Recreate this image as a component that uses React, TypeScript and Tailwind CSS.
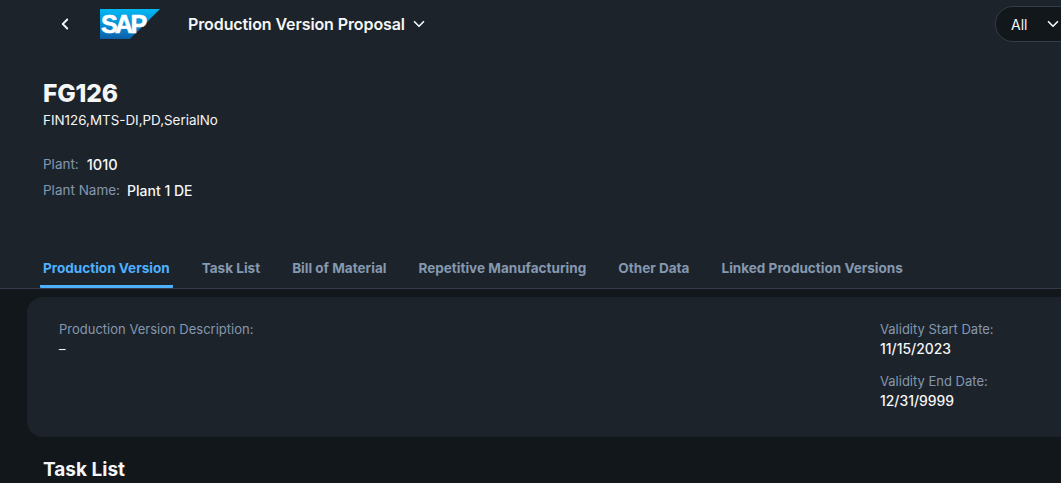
import { ChevronDown, ChevronLeft } from 'lucide-react'

const tabs = ['Task List', 'Bill of Material', 'Repetitive Manufacturing', 'Other Data', 'Linked Production Versions']

const SapLogo = () => (
  <svg width="60" height="30" viewBox="0 0 60 30" className="block">
    <defs>
      <linearGradient id="sapBlue" x1="0" y1="0" x2="0" y2="1">
        <stop offset="0" stopColor="#00b8f1" />
        <stop offset="0.5" stopColor="#0a8fd8" />
        <stop offset="1" stopColor="#0a5fa8" />
      </linearGradient>
    </defs>
    <polygon points="0,0 60,0 30,30 0,30" fill="url(#sapBlue)" />
    <text x="1" y="24" fill="#ffffff" stroke="#ffffff" strokeWidth="0.6" fontSize="25" fontWeight="700" fontFamily="'Liberation Sans', sans-serif" letterSpacing="-2.6">SAP</text>
  </svg>
)

export default function App() {
  return (
    <div className="w-[1061px] h-[483px] overflow-hidden bg-[#12171c] text-[14px] text-[#f5f6f7] font-['Inter','Noto_Sans',sans-serif]">
      <div className="h-[289px] bg-[#1d232a] border-b border-[#333c48] flex flex-col">
        <div className="h-12 flex items-center">
          <ChevronLeft size={18} strokeWidth={2.5} className="ml-[56px]" />
          <div className="ml-[26px]"><SapLogo /></div>
          <div className="ml-7 flex items-center gap-[5px] font-semibold text-[16px] tracking-[-0.1px]">
            Production Version Proposal
            <ChevronDown size={18} strokeWidth={2.25} />
          </div>
          <div className="ml-auto -mr-8 w-[98px] h-9 rounded-[18px] bg-[#12171c] border border-[#333c48] flex items-center pl-[15px] gap-[17px]">
            All
            <ChevronDown size={18} strokeWidth={2.25} />
          </div>
        </div>
        <div className="ml-[43px] mt-[30px]">
          <h1 className="text-[24.6px] leading-[30px] font-extrabold tracking-[-0.2px]">FG126</h1>
          <p className="mt-[3px] leading-[18px] text-[13.4px]">FIN126,MTS-DI,PD,SerialNo</p>
          <div className="mt-[26px] flex items-center gap-2 h-[18px] text-[13.5px]">
            <span className="text-[#8498b0]">Plant:</span>
            <span className="text-[14.6px] font-medium leading-[16px] pt-[1px]">1010</span>
          </div>
          <div className="mt-2 flex items-center gap-2 h-[18px] text-[13.5px]">
            <span className="text-[#8498b0]">Plant Name:</span>
            <span className="text-[14px] font-medium -ml-[1px]">Plant 1 DE</span>
          </div>
        </div>
        <div className="mt-auto ml-10 flex items-end gap-[26px] text-[#8498b0] font-bold text-[13.55px]">
          <div className="h-[38px] px-[3px] flex items-center text-[#4db1ff] border-b-[3px] border-[#4db1ff] rounded-b-[1px] pt-[1px]">
            Production Version
          </div>
          {tabs.map((tab) => (
            <div key={tab} className="h-[38px] px-[3px] flex items-center pb-[2px]">{tab}</div>
          ))}
        </div>
      </div>

      <div className="ml-[27px] -mr-10 mt-2 h-[140px] rounded-l-2xl bg-[#1d232a] flex justify-between pl-8 pt-[22px] pr-[107px] text-[13px] leading-[20px]">
        <div>
          <div className="text-[#8498b0]">Production Version Description:</div>
          <div>–</div>
        </div>
        <div className="w-[114px]">
          <div className="text-[#8498b0]">Validity Start Date:</div>
          <div className="text-[13.9px] font-medium">11/15/2023</div>
          <div className="mt-3 text-[#8498b0]">Validity End Date:</div>
          <div className="text-[13.9px] font-medium">12/31/9999</div>
        </div>
      </div>

      <h2 className="ml-[43px] mt-[21px] text-[19px] leading-6 font-bold">Task List</h2>
    </div>
  )
}
